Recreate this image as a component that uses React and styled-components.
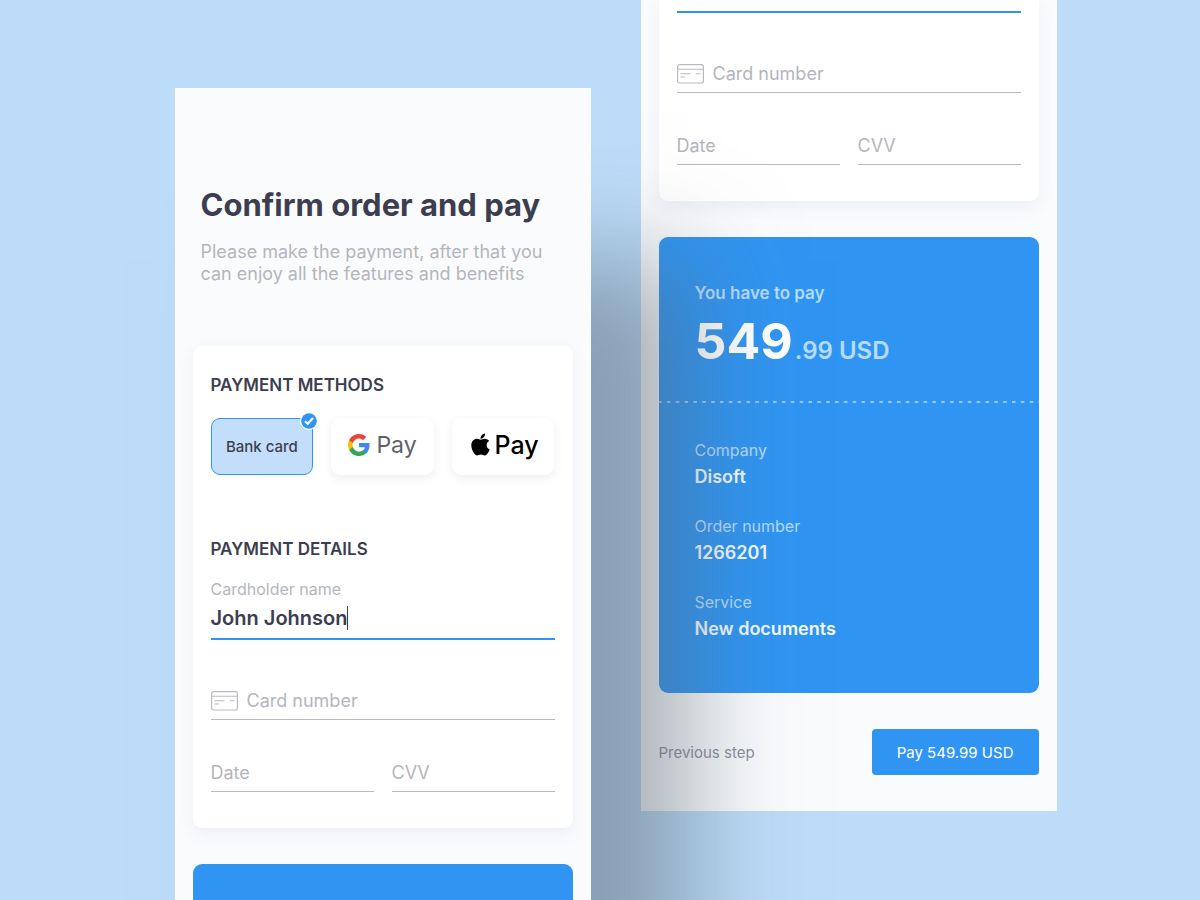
import React from "react";
import styled, { createGlobalStyle, css } from "styled-components";
import { FaApple } from "react-icons/fa";

const color = {
  page: "#bcdcf9",
  screen: "#fafbfd",
  ink: "#3c3e50",
  muted: "#b4b6bc",
  rule: "#b9bac3",
  blue: "#3095f2",
  blueLight: "#c2defb",
  onBlue: "#b5dcfc",
};

const GlobalStyle = createGlobalStyle`
  *, *::before, *::after { box-sizing: border-box; }
  body {
    margin: 0;
    background: ${color.page};
    color: ${color.ink};
    font-family: Inter, "Liberation Sans", sans-serif;
  }
  h1, h2, p, dl, dd, fieldset { margin: 0; padding: 0; border: 0; }
  button, input { font: inherit; }
`;

const Stage = styled.main`
  display: flex;
  justify-content: center;
  align-items: flex-start;
  gap: 50px;
  min-height: 100vh;
  padding-left: 31px;
  overflow: hidden;
`;

const Screen = styled.section`
  flex: 0 1 416px;
  min-width: 0;
  display: flex;
  flex-direction: column;
  gap: 36px;
  padding: 0 18px;
  background: ${color.screen};
  ${(p) =>
    p.$raised
      ? css`
          position: relative;
          z-index: 1;
          align-self: stretch;
          margin-top: 88px;
          padding-top: 97px;
          box-shadow: 98px 172px 100px rgba(85, 100, 112, 0.5);
        `
      : css`
          padding-bottom: 36px;
        `}
`;

const Intro = styled.header`
  padding: 0 8px 25px;
`;

const Title = styled.h1`
  font-size: 31px;
  line-height: 40px;
  font-weight: 700;
  white-space: nowrap;
`;

const Lead = styled.p`
  margin-top: 16px;
  font-size: 18px;
  line-height: 22px;
  color: ${color.muted};
`;

const Card = styled.form`
  padding: ${(p) => (p.$continued ? "11px" : "27px")} 18px 36px;
  border-radius: ${(p) => (p.$continued ? "0 0 9px 9px" : "9px")};
  background: #fff;
  box-shadow: 0 6px 16px rgba(60, 80, 120, 0.07);
`;

const SectionTitle = styled.h2`
  font-size: 17px;
  line-height: 24px;
  font-weight: 600;
`;

const Methods = styled.fieldset`
  display: grid;
  grid-template-columns: repeat(3, minmax(0, 1fr));
  gap: 18px;
  margin: 21px 0 62px;
`;

const Method = styled.label`
  position: relative;
  display: flex;
  align-items: center;
  justify-content: center;
  gap: ${(p) => p.$gap || 0}px;
  height: 57px;
  padding-bottom: ${(p) => (p.$gap ? 4 : 0)}px;
  border-radius: 9px;
  border: 1px solid ${(p) => (p.$selected ? color.blue : "#fff")};
  background: ${(p) => (p.$selected ? color.blueLight : "#fff")};
  box-shadow: ${(p) =>
    p.$selected ? "none" : "0 3px 10px rgba(60, 80, 120, 0.09)"};
  font-size: 15px;
  font-weight: 500;
  white-space: nowrap;
  cursor: pointer;
`;

const HiddenRadio = styled.input`
  position: absolute;
  inset: 0;
  width: 100%;
  height: 100%;
  margin: 0;
  opacity: 0;
  cursor: pointer;
`;

const Badge = styled.svg`
  position: absolute;
  top: -7px;
  right: -6px;
  width: 18px;
  height: 18px;
`;

const PayWord = styled.span`
  font-size: ${(p) => (p.$dark ? 25 : 23)}px;
  line-height: 32px;
  font-weight: ${(p) => (p.$dark ? 500 : 400)};
  color: ${(p) => (p.$dark ? "#000" : "#5f6368")};
`;

const Field = styled.label`
  display: flex;
  align-items: center;
  gap: 9px;
  height: 36px;
  min-width: 0;
  padding-bottom: 2px;
  border-bottom: 1px solid ${color.rule};
`;

const Input = styled.input`
  flex: 1;
  width: 100%;
  min-width: 0;
  height: 24px;
  padding: 0;
  border: 0;
  outline: 0;
  background: transparent;
  color: ${color.ink};
  font-size: 18px;
  &::placeholder {
    color: ${color.muted};
    opacity: 1;
  }
`;

const FieldLabel = styled.label`
  display: block;
  margin-top: 18px;
  font-size: 16px;
  line-height: 20px;
  color: ${color.muted};
`;

const ActiveField = styled.div`
  display: flex;
  align-items: center;
  height: 41px;
  padding-bottom: 1px;
  border-bottom: 2px solid ${color.blue};
`;

const NameInput = styled.input`
  field-sizing: content;
  height: 28px;
  padding: 0;
  border: 0;
  outline: 0;
  background: transparent;
  color: ${color.ink};
  font-size: 20px;
  font-weight: 600;
`;

const Caret = styled.span`
  width: 1px;
  height: 24px;
  background: ${color.ink};
`;

const ActiveRule = styled.div`
  height: 2px;
  background: ${color.blue};
`;

const CardFields = styled.div`
  display: grid;
  grid-template-columns: repeat(2, minmax(0, 1fr));
  gap: 36px 18px;
  margin-top: 44px;
  & > :first-child {
    grid-column: 1 / -1;
  }
`;

const CardGlyph = styled.svg`
  flex: none;
  width: 27px;
  height: 20px;
`;

const SummaryTop = styled.div`
  flex: 1;
  border-radius: 9px 9px 0 0;
  background: ${color.blue};
`;

const Summary = styled.div`
  border-radius: 9px;
  background: ${color.blue};
  color: ${color.onBlue};
`;

const Total = styled.div`
  padding: 44px 36px 20px;
`;

const TotalLabel = styled.p`
  font-size: 17px;
  line-height: 24px;
  font-weight: 600;
`;

const Amount = styled.p`
  display: flex;
  align-items: baseline;
  gap: 2px;
  margin-top: 6px;
  font-size: 24px;
  line-height: 60px;
  font-weight: 600;
  white-space: nowrap;
`;

const Whole = styled.strong`
  font-size: 50px;
  font-weight: 700;
  color: #fff;
`;

const Perforation = styled.svg`
  display: block;
  width: 100%;
  height: 2px;
`;

const Facts = styled.dl`
  display: grid;
  gap: 22px;
  padding: 35px 36px 49px;
`;

const FactName = styled.dt`
  font-size: 16px;
  line-height: 24px;
`;

const FactValue = styled.dd`
  font-size: 18px;
  line-height: 30px;
  font-weight: 600;
  color: #f4faff;
`;

const Actions = styled.footer`
  display: flex;
  align-items: center;
  justify-content: space-between;
`;

const BackLink = styled.a`
  font-size: 15px;
  color: #8d8f9b;
  text-decoration: none;
`;

const PayButton = styled.button`
  height: 46px;
  padding: 0 25px;
  border: 0;
  border-radius: 4px;
  background: ${color.blue};
  color: #fff;
  font-size: 15px;
  cursor: pointer;
`;

const GoogleLogo = () => (
  <svg width="22" height="22" viewBox="1 1 22 22" aria-hidden="true">
    <path fill="#4285f4" d="M22.56 12.25c0-.78-.07-1.53-.2-2.25H12v4.26h5.92c-.26 1.37-1.04 2.53-2.21 3.31v2.77h3.57c2.08-1.92 3.28-4.74 3.28-8.09z" />
    <path fill="#34a853" d="M12 23c2.97 0 5.46-.98 7.28-2.66l-3.57-2.77c-.98.66-2.23 1.06-3.71 1.06-2.86 0-5.29-1.93-6.16-4.53H2.18v2.84C3.99 20.53 7.7 23 12 23z" />
    <path fill="#fbbc04" d="M5.84 14.09c-.22-.66-.35-1.36-.35-2.09s.13-1.43.35-2.09V7.07H2.18C1.43 8.55 1 10.22 1 12s.43 3.45 1.18 4.93l3.66-2.84z" />
    <path fill="#ea4335" d="M12 5.38c1.62 0 3.06.56 4.21 1.64l3.15-3.15C17.45 2.09 14.97 1 12 1 7.7 1 3.99 3.47 2.18 7.07l3.66 2.84c.87-2.6 3.3-4.53 6.16-4.53z" />
  </svg>
);

const CardIcon = () => (
  <CardGlyph viewBox="0 0 27 20" fill="none" stroke={color.rule} aria-hidden="true">
    <rect x="0.6" y="0.6" width="25.8" height="18.4" rx="2" strokeWidth="1.2" />
    <path d="M0.5 5.2H26.5M3.5 9.8H13.5M19 9.8H23.5M3.5 13H8" strokeWidth="1.1" />
  </CardGlyph>
);

const CardDetails = () => (
  <CardFields>
    <Field>
      <CardIcon />
      <Input placeholder="Card number" aria-label="Card number" />
    </Field>
    <Field>
      <Input placeholder="Date" aria-label="Date" />
    </Field>
    <Field>
      <Input placeholder="CVV" aria-label="CVV" />
    </Field>
  </CardFields>
);

const facts = [
  ["Company", "Disoft"],
  ["Order number", "1266201"],
  ["Service", "New documents"],
];

export default function App() {
  return (
    <>
      <GlobalStyle />
      <Stage>
        <Screen $raised>
          <Intro>
            <Title>Confirm order and pay</Title>
            <Lead>
              Please make the payment, after that you
              <br />
              can enjoy all the features and benefits
            </Lead>
          </Intro>
          <Card>
            <SectionTitle>PAYMENT METHODS</SectionTitle>
            <Methods>
              <Method $selected>
                <HiddenRadio type="radio" name="method" defaultChecked />
                Bank card
                <Badge viewBox="0 0 18 18" aria-hidden="true">
                  <circle cx="9" cy="9" r="9" fill="#fff" />
                  <circle cx="9" cy="9" r="7.8" fill={color.blue} />
                  <path d="M5 9.2L7.8 11.8L13 6" fill="none" stroke="#fff" strokeWidth="2.2" />
                </Badge>
              </Method>
              <Method $gap={6}>
                <HiddenRadio type="radio" name="method" aria-label="Google Pay" />
                <GoogleLogo />
                <PayWord>Pay</PayWord>
              </Method>
              <Method $gap={2}>
                <HiddenRadio type="radio" name="method" aria-label="Apple Pay" />
                <FaApple size={25} color="#000" aria-hidden="true" />
                <PayWord $dark>Pay</PayWord>
              </Method>
            </Methods>
            <SectionTitle>PAYMENT DETAILS</SectionTitle>
            <FieldLabel htmlFor="holder">Cardholder name</FieldLabel>
            <ActiveField>
              <NameInput id="holder" defaultValue="John Johnson" />
              <Caret />
            </ActiveField>
            <CardDetails />
          </Card>
          <SummaryTop />
        </Screen>

        <Screen>
          <Card $continued>
            <ActiveRule />
            <CardDetails />
          </Card>
          <Summary>
            <Total>
              <TotalLabel>You have to pay</TotalLabel>
              <Amount>
                <Whole>549</Whole>
                <span>.99 USD</span>
              </Amount>
            </Total>
            <Perforation aria-hidden="true">
              <line x1="-1" y1="1" x2="100%" y2="1" stroke="#b5dcfc" strokeWidth="1.4" strokeDasharray="3.6 5.25" />
            </Perforation>
            <Facts>
              {facts.map(([name, value]) => (
                <div key={name}>
                  <FactName>{name}</FactName>
                  <FactValue>{value}</FactValue>
                </div>
              ))}
            </Facts>
          </Summary>
          <Actions>
            <BackLink href="#previous">Previous step</BackLink>
            <PayButton type="button">Pay 549.99 USD</PayButton>
          </Actions>
        </Screen>
      </Stage>
    </>
  );
}
